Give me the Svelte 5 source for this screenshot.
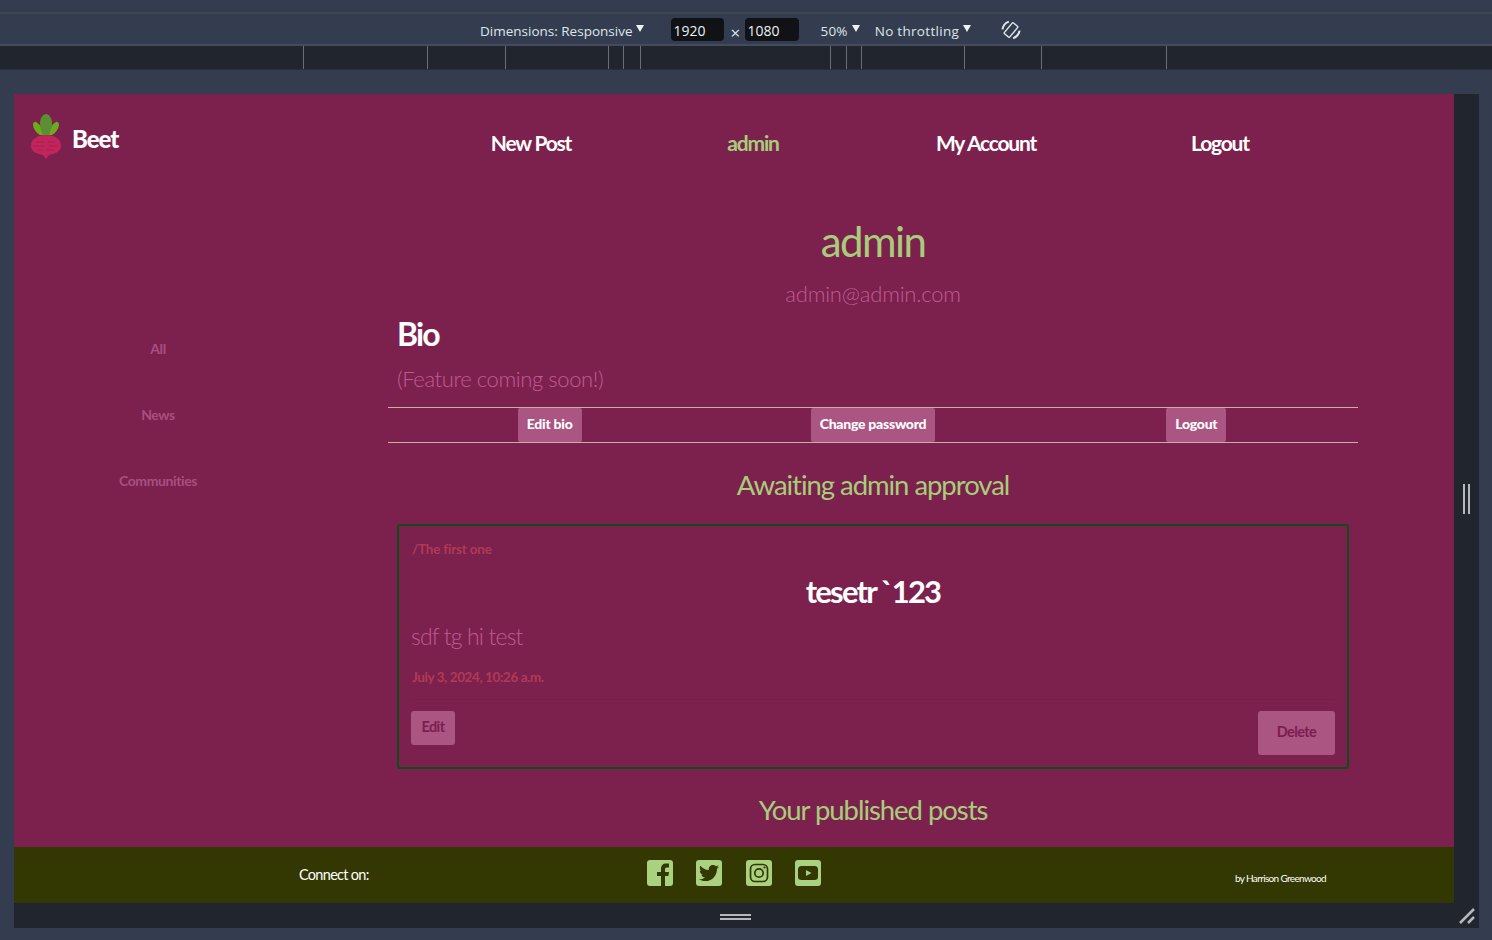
<script>
	const ticks = [303, 427, 505, 608, 623, 640, 830, 846, 861, 964, 1041, 1166];
	const navItems = [
		{ label: 'New Post', width: 246 },
		{ label: 'admin', width: 198, accent: true },
		{ label: 'My Account', width: 268 },
		{ label: 'Logout', width: 200 }
	];
	const sideLinks = ['All', 'News', 'Communities'];
</script>

<div class="shell">
	<div class="top-strip"></div>
	<div class="toolbar">
		<span class="dim first">Dimensions: Responsive</span><i class="caret"></i>
		<span class="size-box w1">1920</span>
		<span class="times">×</span>
		<span class="size-box">1080</span>
		<span class="dim zoom">50%</span><i class="caret"></i>
		<span class="dim throttle">No throttling</span><i class="caret"></i>
		<svg class="rotate" width="24" height="24" viewBox="0 0 24 24" fill="none" stroke="#e4e8ee" stroke-width="1.4">
			<g transform="rotate(40 12 12)">
				<rect x="8.500" y="5" width="7" height="14" rx="1" />
				<path d="M5 7a10 10 0 0 0 0 10M19 17a10 10 0 0 0 0-10" stroke-width="2" />
			</g>
		</svg>
	</div>
	<div class="ruler">
		{#each ticks as x}
			<span class="tick" style="left: {x}px"></span>
		{/each}
	</div>

	<div class="stage">
		<div class="stage-row">
			<div class="page">
				<header>
					<div class="brand">
						<svg width="32" height="46" viewBox="0 0 32 46">
							<path d="M6 9c4 2 7 7 8 13h-4C6 20 3 15 3 11c0-1 2-3 3-2z" fill="#6cab1c" />
							<path d="M26 9c-4 2-7 7-8 13h4c4-2 7-7 7-11 0-1-2-3-3-2z" fill="#6cab1c" />
							<path d="M16 1c3 0 6 4 6 9 0 5-2 10-3 12h-6c-1-2-3-7-3-12 0-5 3-9 6-9z" fill="#5b8f33" />
							<path d="M16 22c9 0 15 4 15 11 0 6-7 8-12 9-1 1-2 3-3 4-1-1-2-3-3-4C8 41 1 39 1 33c0-7 6-11 15-11z" fill="#c2255c" />
							<path d="M6 29h8M18 29h7M3 33h12M19 33h9M7 37h6M16 37h8" stroke="#a81f50" stroke-width="1" />
						</svg>
						<span class="brand-name">Beet</span>
					</div>
					<nav>
						{#each navItems as item}
							<span class="nav-item" class:accent={item.accent} style="width: {item.width}px">{item.label}</span>
						{/each}
					</nav>
				</header>

				<div class="body">
					<aside>
						{#each sideLinks as link}
							<span>{link}</span>
						{/each}
					</aside>
					<main>
						<h1>admin</h1>
						<p class="email">admin@admin.com</p>
						<h2 class="bio">Bio</h2>
						<p class="bio-text">(Feature coming soon!)</p>
						<div class="actions">
							<div class="cell"><span class="btn">Edit bio</span></div>
							<div class="cell"><span class="btn">Change password</span></div>
							<div class="cell"><span class="btn">Logout</span></div>
						</div>
						<h3>Awaiting admin approval</h3>
						<article>
							<p class="community">/The first one</p>
							<h2 class="post-title">tesetr `123</h2>
							<p class="post-body">sdf tg hi test</p>
							<p class="date">July 3, 2024, 10:26 a.m.</p>
							<div class="post-actions">
								<span class="btn-dark edit">Edit</span>
								<span class="btn-dark delete">Delete</span>
							</div>
						</article>
						<h3 class="published">Your published posts</h3>
					</main>
				</div>

				<footer>
					<span class="connect">Connect on:</span>
					<div class="socials">
						<svg width="26" height="26" viewBox="0 0 26 26">
							<rect width="26" height="26" rx="3" fill="#a9d17f" />
							<path d="M14 26V16h-4v-4h4V9c0-3.500 2-5.500 5-5.500h3v4h-2c-1.500 0-2 .7-2 2V12h4l-.6 4H18v10z" fill="#333702" />
						</svg>
						<svg width="26" height="26" viewBox="0 0 26 26">
							<rect width="26" height="26" rx="3" fill="#a9d17f" />
							<svg x="3" y="3" width="20" height="20" viewBox="0 0 512 512">
								<path fill="#333702" d="M459.37 151.716c.325 4.548.325 9.097.325 13.645 0 138.72-105.583 298.558-298.558 298.558-59.452 0-114.68-17.219-161.137-47.106 8.447.974 16.568 1.299 25.34 1.299 49.055 0 94.213-16.568 130.274-44.832-46.132-.975-84.792-31.188-98.112-72.772 6.498.974 12.995 1.624 19.818 1.624 9.421 0 18.843-1.3 27.614-3.573-48.081-9.747-84.143-51.98-84.143-102.985v-1.299c13.969 7.797 30.214 12.67 47.431 13.319-28.264-18.843-46.781-51.005-46.781-87.391 0-19.492 5.197-37.36 14.294-52.954 51.655 63.675 129.3 105.258 216.365 109.807-1.624-7.797-2.599-15.918-2.599-24.04 0-57.828 46.782-104.934 104.934-104.934 30.213 0 57.502 12.67 76.67 33.137 23.715-4.548 46.456-13.32 66.599-25.34-7.798 24.366-24.366 44.833-46.132 57.827 21.117-2.273 41.584-8.122 60.426-16.243-14.292 20.791-32.161 39.308-52.628 54.253z" />
							</svg>
						</svg>
						<svg width="26" height="26" viewBox="0 0 26 26" fill="none" stroke="#333702" stroke-width="1.7">
							<rect width="26" height="26" rx="3" fill="#a9d17f" stroke="none" />
							<rect x="4.500" y="4.500" width="17" height="17" rx="4.500" />
							<circle cx="13" cy="13" r="4.200" />
							<circle cx="18.500" cy="7.500" r="1.100" fill="#333702" stroke="none" />
						</svg>
						<svg width="26" height="26" viewBox="0 0 26 26">
							<rect width="26" height="26" rx="3" fill="#a9d17f" />
							<rect x="3" y="6" width="20" height="14" rx="3.500" fill="#333702" />
							<path d="M11 10l5.500 3-5.500 3z" fill="#a9d17f" />
						</svg>
					</div>
					<span class="credit">by Harrison Greenwood</span>
				</footer>
			</div>
			<div class="side-gutter"><span class="grip-v"></span></div>
		</div>
		<div class="bottom-gutter">
			<span class="grip-h"></span>
			<svg class="corner" width="16" height="16" viewBox="0 0 16 16" stroke="#b5b8bd" stroke-width="2.500">
				<path d="M1 15L15 1M9 15l6-6" />
			</svg>
		</div>
	</div>
</div>

<style>
	:global(body) {
		background: #333d4f;
	}

	.shell {
		width: 1492px;
		height: 940px;
		overflow: hidden;
		font-family: 'Lato', sans-serif;
		background: #333d4f;
	}

	.top-strip {
		height: 12px;
		border-bottom: 2px solid #3f4650;
	}

	.toolbar {
		height: 32px;
		padding: 3px 0 0 480px;
		box-sizing: border-box;
		display: flex;
		align-items: center;
		color: #dfe5ec;
		font-family: 'Open Sans', sans-serif;
		font-size: 13.500px;
		border-bottom: 2px solid #434c5e;
	}

	.caret {
		width: 0;
		height: 0;
		margin: -4px 0 0 4px;
		border-left: 4.500px solid transparent;
		border-right: 4.500px solid transparent;
		border-top: 7px solid #eef1f5;
	}

	.size-box {
		width: 54px;
		height: 23px;
		margin-top: -2px;
		margin-left: 25px;
		padding-left: 2px;
		box-sizing: border-box;
		background: #111215;
		border-radius: 4px;
		line-height: 25px;
		color: #eceff3;
		font-size: 14px;
	}

	.size-box.w1 {
		width: 53px;
		margin-left: 27px;
	}

	.times {
		width: 22px;
		text-align: center;
		margin-right: -26px;
		margin-top: 3px;
		font-size: 17px;
	}

	.zoom {
		margin-left: 21px;
		letter-spacing: 0.2px;
	}

	.throttle {
		margin-left: 15px;
		letter-spacing: 0.3px;
	}

	.rotate {
		margin-left: 28px;
		margin-top: -2px;
	}

	.ruler {
		position: relative;
		height: 24px;
		box-sizing: border-box;
		background: #21252d;
		border-bottom: 1px solid #2b2e34;
	}

	.tick {
		position: absolute;
		top: 0;
		bottom: 0;
		width: 1px;
		background: #6a6e75;
	}

	.stage {
		padding: 24px 13px 12px 14px;
	}

	.stage-row {
		display: flex;
	}

	.page {
		width: 1440px;
		height: 809px;
		background: #7c214d;
		display: flex;
		flex-direction: column;
		overflow: hidden;
	}

	header {
		height: 100px;
		display: flex;
		flex-shrink: 0;
	}

	.brand {
		width: 394px;
		padding: 19px 0 0 16px;
		box-sizing: border-box;
		display: flex;
		gap: 10px;
	}

	.brand-name {
		margin-top: 11px;
		color: #fff;
		font-size: 24px;
		font-weight: 900;
		letter-spacing: -1px;
	}

	nav {
		display: flex;
		padding-top: 34px;
	}

	.nav-item {
		text-align: center;
		color: #fff;
		font-size: 21px;
		font-weight: 700;
		letter-spacing: -1.2px;
		line-height: 30px;
		white-space: nowrap;
	}

	.nav-item.accent {
		color: #a8cd7a;
	}

	.body {
		flex: 1;
		display: flex;
		min-height: 0;
	}

	aside {
		width: 288px;
		padding-top: 145px;
		display: flex;
		flex-direction: column;
		align-items: center;
		gap: 47px;
		color: #a84f80;
		font-size: 14px;
		font-weight: 700;
		letter-spacing: -0.4px;
		line-height: 19px;
	}

	main {
		width: 1142px;
		padding: 0 86px;
		box-sizing: border-box;
		flex-shrink: 0;
	}

	h1 {
		margin: 17px 0 0;
		text-align: center;
		color: #a8cd7a;
		font-size: 42px;
		font-weight: 400;
		letter-spacing: -1.6px;
		line-height: 60px;
	}

	.email {
		margin: 9px 0 0;
		text-align: center;
		color: #c05a94;
		font-size: 22px;
		font-weight: 300;
		letter-spacing: -0.2px;
		line-height: 28px;
	}

	.bio {
		margin: 5px 0 0 9px;
		color: #fff;
		font-size: 32px;
		font-weight: 700;
		letter-spacing: -1.8px;
		line-height: 42px;
	}

	.bio-text {
		margin: 8px 0 0 9px;
		color: #c05a94;
		font-size: 22px;
		font-weight: 300;
		line-height: 32px;
		letter-spacing: -0.4px;
	}

	.actions {
		margin-top: 12px;
		height: 36px;
		box-sizing: border-box;
		display: grid;
		grid-template-columns: repeat(3, 1fr);
		border-top: 1px solid #c6b1a4;
		border-bottom: 1px solid #c6b1a4;
	}

	.cell {
		display: flex;
		justify-content: center;
	}

	.btn {
		padding: 0 9px;
		line-height: 32px;
		background: #aa5582;
		border-radius: 2px;
		color: #fff;
		font-size: 14px;
		font-weight: 900;
		letter-spacing: -0.25px;
	}

	h3 {
		margin: 22px 0 0;
		text-align: center;
		color: #a8cd7a;
		font-size: 27.500px;
		font-weight: 400;
		letter-spacing: -1.050px;
		line-height: 40px;
	}

	article {
		margin: 19px 9px 0;
		height: 245px;
		box-sizing: border-box;
		border: 2px solid #0f4b1c;
		border-radius: 3px;
		padding: 14px 12px 0;
		display: flex;
		flex-direction: column;
	}

	.community {
		margin: 0 0 0 1px;
		color: #b03a55;
		font-size: 13.500px;
		font-weight: 700;
		letter-spacing: -0.2px;
		line-height: 18px;
	}

	.post-title {
		margin: 11px 0 0;
		text-align: center;
		color: #fff;
		font-size: 31px;
		font-weight: 700;
		letter-spacing: -1.8px;
		line-height: 44px;
	}

	.post-body {
		margin: 7px 0 0;
		color: #c05a94;
		font-size: 23px;
		font-weight: 300;
		letter-spacing: -0.850px;
		line-height: 32px;
	}

	.date {
		margin: 15px 0 0 1px;
		color: #b03a55;
		font-size: 13.500px;
		font-weight: 700;
		letter-spacing: -0.4px;
		line-height: 20px;
	}

	.post-actions {
		margin-top: 12px;
		padding-top: 11px;
		display: flex;
		justify-content: space-between;
		align-items: flex-start;
		border-top: 1px solid #75204a;
	}

	.btn-dark {
		background: #aa5582;
		border-radius: 3px;
		color: #7c1d52;
		font-size: 14.500px;
		font-weight: 700;
		letter-spacing: -0.6px;
		text-align: center;
	}

	.edit {
		width: 44px;
		height: 34px;
		line-height: 31px;
	}

	.delete {
		width: 77px;
		height: 44px;
		line-height: 41px;
	}

	.published {
		margin-top: 21px;
	}

	footer {
		height: 56px;
		flex-shrink: 0;
		background: #333702;
		display: flex;
		align-items: flex-start;
		color: #fff;
	}

	.connect {
		margin: 18px 0 0 285px;
		width: 348px;
		font-size: 14.500px;
		letter-spacing: -0.7px;
		line-height: 20px;
	}

	.socials {
		width: 588px;
		padding-top: 13px;
		display: flex;
		gap: 23.300px;
	}

	.credit {
		margin-top: 24px;
		font-size: 10px;
		letter-spacing: -0.650px;
		line-height: 14px;
		white-space: nowrap;
	}

	.side-gutter {
		width: 25px;
		background: #21252d;
		display: flex;
		align-items: center;
		justify-content: center;
	}

	.grip-v {
		width: 3px;
		height: 30px;
		border-left: 2px solid #b5b8bd;
		border-right: 2px solid #b5b8bd;
	}

	.bottom-gutter {
		position: relative;
		height: 25px;
		width: 1465px;
		padding-right: 23px;
		box-sizing: border-box;
		background: #21252d;
		display: flex;
		justify-content: center;
		align-items: center;
	}

	.grip-h {
		width: 31px;
		height: 2px;
		margin-top: 3px;
		border-top: 2px solid #b5b8bd;
		border-bottom: 2px solid #b5b8bd;
	}

	.corner {
		position: absolute;
		right: 4px;
		bottom: 4px;
	}
</style>
